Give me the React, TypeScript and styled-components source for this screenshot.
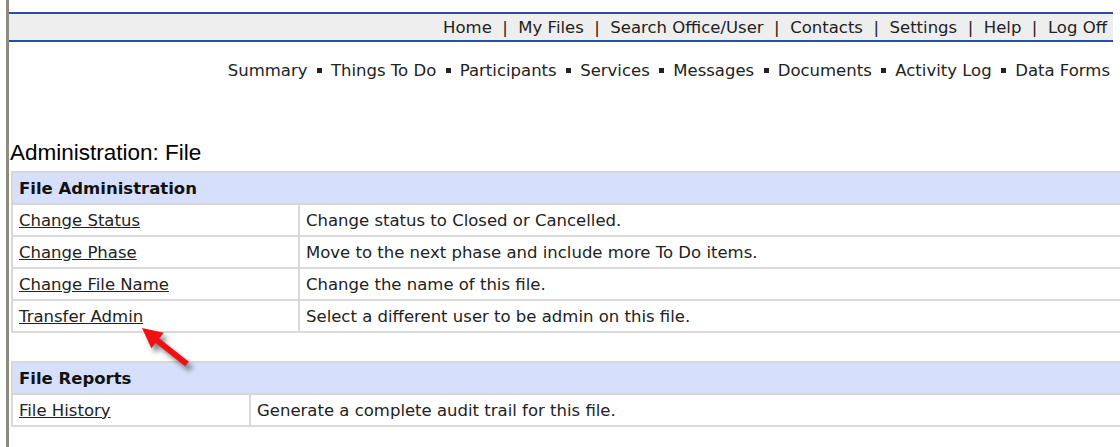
import React from "react";
import styled, { createGlobalStyle } from "styled-components";

const GlobalStyle = createGlobalStyle`
  html, body {
    margin: 0;
    padding: 0;
    background: #ffffff;
    overflow: hidden;
  }
  body {
    font-family: "DejaVu Sans", Verdana, sans-serif;
    color: #1a1a1a;
  }
`;

const Frame = styled.div`
  position: relative;
  margin-left: 6px;
  min-height: 447px;
  border-left: 3px solid #8c8b80;
  box-sizing: border-box;
  padding-top: 12px;
`;

const TopBar = styled.div`
  margin-right: 7px;
  height: 26px;
  background: #eeeeee;
  border-top: 2px solid #2c4caa;
  border-bottom: 2px solid #2c4caa;
  display: flex;
  align-items: center;
  justify-content: flex-end;
  padding-right: 6px;
  font-size: 16.5px;
  color: #222;
`;

const TopLink = styled.span`
  white-space: pre;
`;

const Sep = styled.span`
  white-space: pre;
`;

const SubNav = styled.div`
  display: flex;
  justify-content: flex-end;
  align-items: center;
  margin-top: 18px;
  padding-right: 10px;
  font-size: 16.5px;
  color: #222;
  height: 20px;
`;

const Bullet = styled.span`
  display: inline-block;
  width: 5px;
  height: 5px;
  background: #222;
  margin: 0 9px 0 9.5px;
`;

const Heading = styled.h1`
  margin: 60px 0 0 1px;
  font-family: "Liberation Sans", Arial, sans-serif;
  font-weight: normal;
  font-size: 22.5px;
  color: #000;
  line-height: 26px;
`;

const Table = styled.table<{ $top: number }>`
  margin: ${(p) => p.$top}px 0 0 2px;
  width: 1120px;
  border-collapse: collapse;
  font-size: 16.5px;
`;

const HeadCell = styled.th`
  background: #d6e0fc;
  border: 2px solid #d7d7d7;
  text-align: left;
  font-weight: bold;
  height: 30px;
  padding: 0 6px;
  color: #111;
`;

const Cell = styled.td<{ $w?: number }>`
  border: 2px solid #d9d9d9;
  height: 30px;
  padding: 0 6px;
  color: #222;
  white-space: nowrap;
  ${(p) => (p.$w ? `width: ${p.$w}px;` : "")}
`;

const Link = styled.a`
  color: #222;
  text-decoration: underline;
  cursor: pointer;
`;

const Pointer = styled.svg`
  position: absolute;
  left: 121px;
  top: 320px;
  overflow: visible;
`;

const topLinks = ["Home", "My Files", "Search Office/User", "Contacts", "Settings", "Help", "Log Off"];
const tabs = ["Summary", "Things To Do", "Participants", "Services", "Messages", "Documents", "Activity Log", "Data Forms"];

const adminRows = [
  ["Change Status", "Change status to Closed or Cancelled."],
  ["Change Phase", "Move to the next phase and include more To Do items."],
  ["Change File Name", "Change the name of this file."],
  ["Transfer Admin", "Select a different user to be admin on this file."],
];

export default function App() {
  return (
    <>
      <GlobalStyle />
      <Frame>
        <TopBar>
          {topLinks.map((l, i) => (
            <React.Fragment key={l}>
              {i > 0 && <Sep>{"  |  "}</Sep>}
              <TopLink>{l}</TopLink>
            </React.Fragment>
          ))}
        </TopBar>
        <SubNav>
          {tabs.map((t, i) => (
            <React.Fragment key={t}>
              {i > 0 && <Bullet />}
              <span>{t}</span>
            </React.Fragment>
          ))}
        </SubNav>
        <Heading>Administration: File</Heading>
        <Table $top={5}>
          <thead>
            <tr>
              <HeadCell colSpan={2}>File Administration</HeadCell>
            </tr>
          </thead>
          <tbody>
            {adminRows.map(([a, b]) => (
              <tr key={a}>
                <Cell $w={273}>
                  <Link>{a}</Link>
                </Cell>
                <Cell>{b}</Cell>
              </tr>
            ))}
          </tbody>
        </Table>
        <Table $top={28}>
          <thead>
            <tr>
              <HeadCell colSpan={2}>File Reports</HeadCell>
            </tr>
          </thead>
          <tbody>
            <tr>
              <Cell $w={224}>
                <Link>File History</Link>
              </Cell>
              <Cell>Generate a complete audit trail for this file.</Cell>
            </tr>
          </tbody>
        </Table>
        {/* red call-out arrow with a soft drop shadow */}
        <Pointer width="70" height="60" viewBox="0 0 70 60">
          <defs>
            <filter id="soft" x="-50%" y="-50%" width="200%" height="200%">
              <feGaussianBlur stdDeviation="2.5" />
            </filter>
          </defs>
          <g transform="translate(4 5)" filter="url(#soft)" opacity="0.6">
            <line x1="24" y1="18" x2="57" y2="44" stroke="#3a3a3a" strokeWidth="6" />
            <polygon points="12,8 21.4,28.3 33.8,12.7" fill="#3a3a3a" />
          </g>
          <line x1="24" y1="18" x2="57" y2="44" stroke="#f01010" strokeWidth="6" />
          <polygon points="12,8 21.4,28.3 33.8,12.7" fill="#f01010" />
        </Pointer>
      </Frame>
    </>
  );
}
